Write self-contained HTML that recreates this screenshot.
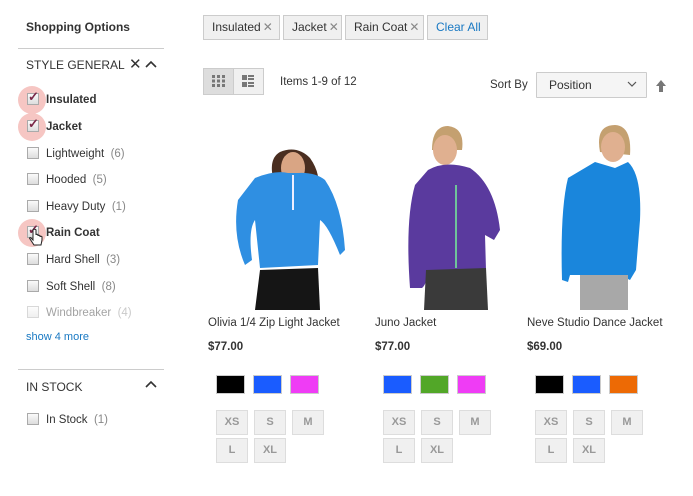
<!DOCTYPE html>
<html><head><meta charset="utf-8"><style>
*{margin:0;padding:0;box-sizing:border-box}
body{width:693px;height:496px;background:#fff;font-family:"Liberation Sans",sans-serif;color:#333;position:relative;overflow:hidden;font-size:11.5px}
.a{position:absolute;white-space:nowrap}
.cb{position:absolute;left:27px;width:12px;height:12px;border:1px solid #aaa;background:linear-gradient(#fafafa,#ddd)}
.hl{position:absolute;left:18px;width:28px;height:28px;border-radius:50%;background:#f6c6c3}
.lbl{position:absolute;left:46px;font-size:11.5px;color:#333}
.cnt{color:#888}
.ck{position:absolute;left:28px;color:#7a2848;font-size:13px;font-weight:bold}
.chip{position:absolute;top:15px;height:25px;border:1px solid #ccc;background:#f0f0f0;font-size:12px;line-height:23px;padding-left:8px}
.chip i{font-style:normal;color:#888;font-size:12px;margin-left:2px}
.sw{position:absolute;top:375px;width:29px;height:19px;border:1px solid #ccc}
.sz{position:absolute;width:32px;height:25px;border:1px solid #ddd;background:#f0f0f0;color:#999;font-weight:bold;font-size:11px;text-align:center;line-height:23px}
.nm{position:absolute;top:317px;font-size:11.5px}
.pr{position:absolute;top:341px;font-weight:bold;font-size:11.5px}
</style></head><body>
<div class="a" style="left:26px;top:20px;font-size:12px;font-weight:bold">Shopping Options</div>
<div class="a" style="left:18px;top:48px;width:146px;height:1px;background:#ccc"></div>
<div class="a" style="left:26px;top:58px;font-size:12px">STYLE GENERAL</div>
<div class="a" style="left:129px;top:55px;font-size:15px">✕</div>
<svg class="a" style="left:145px;top:60px" width="12" height="8"><path d="M1 7L6 2L11 7" stroke="#333" stroke-width="1.6" fill="none"/></svg>

<div class="hl" style="top:86px"></div><div class="hl" style="top:113px"></div><div class="hl" style="top:219px"></div>
<div class="cb" style="top:93px"></div><div class="ck" style="top:89px">✓</div>
<div class="lbl" style="top:94px;font-weight:bold">Insulated</div>
<div class="cb" style="top:120px"></div><div class="ck" style="top:116px">✓</div>
<div class="lbl" style="top:121px;font-weight:bold">Jacket</div>
<div class="cb" style="top:147px"></div><div class="lbl" style="top:148px">Lightweight <span class="cnt">&nbsp;(6)</span></div>
<div class="cb" style="top:173px"></div><div class="lbl" style="top:174px">Hooded <span class="cnt">&nbsp;(5)</span></div>
<div class="cb" style="top:200px"></div><div class="lbl" style="top:201px">Heavy Duty <span class="cnt">&nbsp;(1)</span></div>
<div class="cb" style="top:226px"></div><div class="ck" style="top:222px">✓</div>
<div class="lbl" style="top:227px;font-weight:bold">Rain Coat</div>
<svg class="a" style="left:28px;top:228px" width="16" height="20"><path d="M5 2v10l-2-2c-1-1-2 0-1 1l4 6h7l1-5v-3c0-1-2-1-2 0v-1c0-1-2-1-2 0v-1c0-1-2-1-2 0V2c0-1-3-1-3 0z" fill="#fff" stroke="#222" stroke-width="1"/></svg>
<div class="cb" style="top:253px"></div><div class="lbl" style="top:254px">Hard Shell <span class="cnt">&nbsp;(3)</span></div>
<div class="cb" style="top:280px"></div><div class="lbl" style="top:281px">Soft Shell <span class="cnt">&nbsp;(8)</span></div>
<div style="position:absolute;top:300px;left:0;width:180px;height:20px;opacity:.45"><div class="cb" style="top:6px"></div><div class="lbl" style="top:7px">Windbreaker <span class="cnt">&nbsp;(4)</span></div></div>
<div class="a" style="left:26px;top:331px;color:#1979c3;font-size:11px">show 4 more</div>
<div class="a" style="left:18px;top:369px;width:146px;height:1px;background:#ccc"></div>
<div class="a" style="left:26px;top:380px;font-size:12px">IN STOCK</div>
<svg class="a" style="left:145px;top:380px" width="12" height="8"><path d="M1 7L6 2L11 7" stroke="#333" stroke-width="1.6" fill="none"/></svg>
<div class="cb" style="top:413px"></div><div class="lbl" style="top:414px">In Stock <span class="cnt">&nbsp;(1)</span></div>

<div class="chip" style="left:203px;width:77px">Insulated<i>✕</i></div>
<div class="chip" style="left:283px;width:59px">Jacket<i>✕</i></div>
<div class="chip" style="left:345px;width:79px">Rain Coat<i>✕</i></div>
<div class="chip" style="left:427px;width:61px;color:#1979c3">Clear All</div>

<div class="a" style="left:203px;top:68px;width:61px;height:27px;border:1px solid #ccc;background:#f0f0f0"></div>
<div class="a" style="left:203px;top:68px;width:31px;height:27px;border:1px solid #ccc;background:#ddd"></div>
<svg class="a" style="left:211px;top:74px" width="16" height="14"><g fill="#777"><rect x="1" y="1" width="3" height="3"/><rect x="6" y="1" width="3" height="3"/><rect x="11" y="1" width="3" height="3"/><rect x="1" y="5.5" width="3" height="3"/><rect x="6" y="5.5" width="3" height="3"/><rect x="11" y="5.5" width="3" height="3"/><rect x="1" y="10" width="3" height="3"/><rect x="6" y="10" width="3" height="3"/><rect x="11" y="10" width="3" height="3"/></g></svg>
<svg class="a" style="left:241px;top:74px" width="14" height="14"><g fill="#777"><rect x="1" y="1" width="5" height="5"/><rect x="7" y="1" width="6" height="2"/><rect x="7" y="4" width="6" height="2"/><rect x="1" y="8" width="5" height="5"/><rect x="7" y="8" width="6" height="2"/><rect x="7" y="11" width="6" height="2"/></g></svg>
<div class="a" style="left:280px;top:76px;font-size:11.5px">Items 1-9 of 12</div>
<div class="a" style="left:490px;top:79px;font-size:11.5px">Sort By</div>
<div class="a" style="left:536px;top:72px;width:111px;height:26px;border:1px solid #ccc;background:#f5f5f5;border-radius:1px;padding-left:12px;line-height:25px;font-size:12px">Position</div>
<svg class="a" style="left:627px;top:81px" width="10" height="7"><path d="M1 1L5 5L9 1" stroke="#555" stroke-width="1.2" fill="none"/></svg>
<svg class="a" style="left:655px;top:79px" width="12" height="14"><path d="M6 1L11 7H8V13H4V7H1Z" fill="#777"/></svg>

<svg class="a" style="left:200px;top:110px" width="480" height="200">
<path d="M76 78 Q66 50 80 42 Q97 35 110 48 Q122 65 117 82 Z" fill="#4a2e20"/>
<ellipse cx="93" cy="58" rx="12" ry="16" fill="#d9a584"/>
<rect x="88" y="70" width="10" height="12" fill="#d9a584"/>
<path d="M55 68 Q75 60 88 63 L98 63 Q115 62 125 70 Q142 95 145 140 L140 145 Q128 115 120 110 L118 155 L60 158 L55 110 Q48 120 52 150 L45 155 Q32 125 38 90 Z" fill="#2f8fe2"/>
<path d="M93 65 L93 100" stroke="#eef" stroke-width="2"/>
<path d="M60 160 L118 158 L120 200 L55 200 Z" fill="#151515"/>
<path d="M232 40 Q232 16 248 16 Q265 18 262 40 Z" fill="#c4a070"/>
<ellipse cx="245" cy="40" rx="12" ry="15" fill="#e0b090"/>
<path d="M228 60 Q245 50 270 58 Q295 75 300 120 L294 130 L285 125 L286 160 L230 160 Q226 175 222 178 L210 178 Q205 110 215 75 Z" fill="#5a3a9e"/>
<path d="M256 75 L256 158" stroke="#6fc39a" stroke-width="2"/>
<path d="M226 160 L286 158 L288 200 L224 200 Z" fill="#3a3a3a"/>
<path d="M400 42 Q395 15 415 15 Q432 16 430 45 Z" fill="#c4a070"/>
<ellipse cx="413" cy="37" rx="12" ry="15" fill="#e0b090"/>
<path d="M395 52 L415 58 L428 52 Q442 65 440 110 L436 160 L430 170 L420 165 L370 165 L368 172 L362 170 Q360 100 368 68 Z" fill="#1a86dc"/>
<path d="M380 165 L428 165 L428 200 L380 200 Z" fill="#a8a8a8"/>
</svg>

<div class="nm" style="left:208px">Olivia 1/4 Zip Light Jacket</div>
<div class="nm" style="left:375px">Juno Jacket</div>
<div class="nm" style="left:527px">Neve Studio Dance Jacket</div>
<div class="pr" style="left:208px">$77.00</div>
<div class="pr" style="left:375px">$77.00</div>
<div class="pr" style="left:527px">$69.00</div>

<div class="sw" style="left:216px;background:#000"></div>
<div class="sw" style="left:253px;background:#1a5cff"></div>
<div class="sw" style="left:290px;background:#ef3cf5"></div>
<div class="sw" style="left:383px;background:#1a5cff"></div>
<div class="sw" style="left:420px;background:#52a728"></div>
<div class="sw" style="left:457px;background:#ef3cf5"></div>
<div class="sw" style="left:535px;background:#000"></div>
<div class="sw" style="left:572px;background:#1a5cff"></div>
<div class="sw" style="left:609px;background:#ed6a05"></div>

<div class="sz" style="left:216px;top:410px">XS</div><div class="sz" style="left:254px;top:410px">S</div><div class="sz" style="left:292px;top:410px">M</div>
<div class="sz" style="left:216px;top:438px">L</div><div class="sz" style="left:254px;top:438px">XL</div>
<div class="sz" style="left:383px;top:410px">XS</div><div class="sz" style="left:421px;top:410px">S</div><div class="sz" style="left:459px;top:410px">M</div>
<div class="sz" style="left:383px;top:438px">L</div><div class="sz" style="left:421px;top:438px">XL</div>
<div class="sz" style="left:535px;top:410px">XS</div><div class="sz" style="left:573px;top:410px">S</div><div class="sz" style="left:611px;top:410px">M</div>
<div class="sz" style="left:535px;top:438px">L</div><div class="sz" style="left:573px;top:438px">XL</div>
</body></html>
